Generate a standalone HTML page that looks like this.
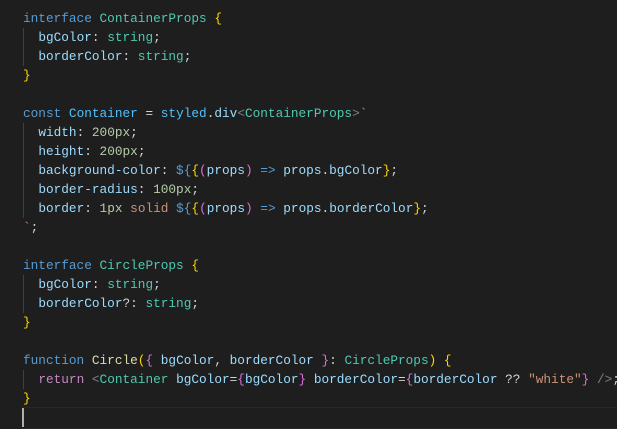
<!DOCTYPE html>
<html><head><style>
body{margin:0;background:#1e1e1e;width:617px;height:429px;overflow:hidden;position:relative}
pre{margin:0;position:absolute;left:23px;top:9px;font-family:"Liberation Mono",monospace;font-size:12.75px;line-height:19px;color:#d4d4d4;white-space:pre}
.k{color:#569cd6}.t{color:#4ec9b0}.p{color:#9cdcfe}.y{color:#ffd700}.m{color:#da70d6}.b{color:#179fff}.s{color:#ce9178}.n{color:#b5cea8}.f{color:#dcdcaa}.r{color:#c586c0}.g{color:#808080}
.guide{position:absolute;left:23px;width:1px;background:#404040}
.cur{position:absolute;left:22px;right:0;top:407px;height:20px;border-top:1px solid #282828;border-bottom:1px solid #282828}
.caret{position:absolute;left:22px;top:408px;width:2px;height:19px;background:#aeafad}
</style></head><body>
<div class="guide" style="top:28px;height:38px"></div>
<div class="guide" style="top:123px;height:95px"></div>
<div class="guide" style="top:275px;height:38px"></div>
<div class="guide" style="top:370px;height:19px"></div>
<div class="cur"></div><div class="caret"></div>
<pre><span class="k">interface</span> <span class="t">ContainerProps</span> <span class="y">{</span>
  <span class="p">bgColor</span>: <span class="t">string</span>;
  <span class="p">borderColor</span>: <span class="t">string</span>;
<span class="y">}</span>

<span class="k">const</span> <span class="p" style="color:#4fc1ff">Container</span> = <span class="p" style="color:#4fc1ff">styled</span>.<span class="p">div</span><span class="g">&lt;</span><span class="t">ContainerProps</span><span class="g">&gt;</span><span class="s">`</span>
  <span class="p">width</span>: <span class="n">200px</span>;
  <span class="p">height</span>: <span class="n">200px</span>;
  <span class="p">background-color</span>: <span class="k">${</span><span class="y">{</span><span class="m">(</span><span class="p">props</span><span class="m">)</span> <span class="k">=&gt;</span> <span class="p">props</span>.<span class="p">bgColor</span><span class="y">}</span>;
  <span class="p">border-radius</span>: <span class="n">100px</span>;
  <span class="p">border</span>: <span class="n">1px</span> <span class="s">solid</span> <span class="k">${</span><span class="y">{</span><span class="m">(</span><span class="p">props</span><span class="m">)</span> <span class="k">=&gt;</span> <span class="p">props</span>.<span class="p">borderColor</span><span class="y">}</span>;
<span class="s">`</span>;

<span class="k">interface</span> <span class="t">CircleProps</span> <span class="y">{</span>
  <span class="p">bgColor</span>: <span class="t">string</span>;
  <span class="p">borderColor</span>?: <span class="t">string</span>;
<span class="y">}</span>

<span class="k">function</span> <span class="f">Circle</span><span class="y">(</span><span class="m">{</span> <span class="p">bgColor</span>, <span class="p">borderColor</span> <span class="m">}</span>: <span class="t">CircleProps</span><span class="y">)</span> <span class="y">{</span>
  <span class="r">return</span> <span class="g">&lt;</span><span class="t">Container</span> <span class="p">bgColor</span>=<span class="m">{</span><span class="p">bgColor</span><span class="m">}</span> <span class="p">borderColor</span>=<span class="m">{</span><span class="p">borderColor</span> ?? <span class="s">"white"</span><span class="m">}</span> <span class="g">/&gt;</span>;
<span class="y">}</span>
</pre>
</body></html>
